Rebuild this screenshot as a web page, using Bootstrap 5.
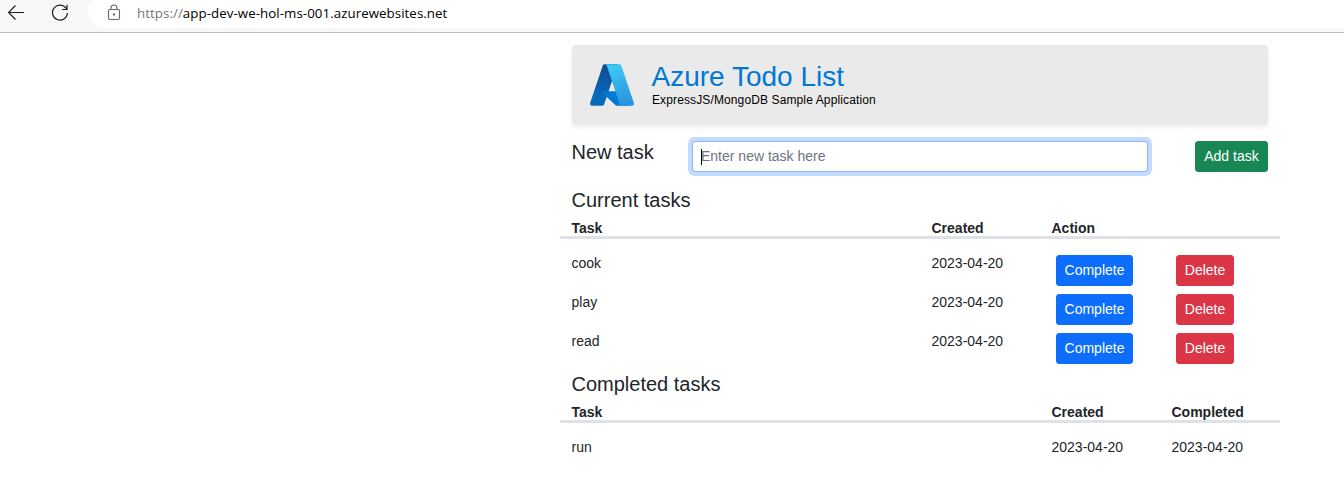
<!DOCTYPE html>
<html lang="en">
<head>
<meta charset="utf-8">
<meta name="viewport" content="width=device-width, initial-scale=1">
<title>Azure Todo List</title>
<link rel="stylesheet" href="https://cdn.jsdelivr.net/npm/bootstrap@5.3.0/dist/css/bootstrap.min.css">
<style>
  body { font-family: "Liberation Sans", Arial, sans-serif; font-size: 14px; background: #fff; height: 503px; overflow: hidden; }
  .browser-bar { height: 33px; background: #f7f7f7; border-bottom: 1px solid #bdbdbd; }
  .address { height: 28px; margin-left: 20px; padding-left: 49px; position: relative; background: #fff; border-bottom-left-radius: 16px 18px; border-top-left-radius: 7px 8px; font: 13.3px/26px "Open Sans", "Noto Sans", sans-serif; letter-spacing: .06px; color: #767676; white-space: nowrap; }
  .address b { font-weight: 400; color: #000; }
  .address svg { position: absolute; left: 19px; top: 4px; }
  .page { width: 720px; margin-left: 560px; padding-top: 12px; }
  .banner { height: 80px; margin: 0 12px 16px; padding: 16px; background: #eaeaea; }
  .banner h1 { font-size: 28px; line-height: 32px; color: #0078d4; margin: 0 0 0 -.5px; font-weight: 400; }
  .banner p { font-size: 12px; line-height: 14px; letter-spacing: .12px; color: #000; margin: 0; }
  h2 { font-size: 20px; line-height: 24px; margin: 0; font-weight: 400; }
  .new-label { padding-left: 11.5px; line-height: 22px; }
  .focused { border-color: #86b7fe; box-shadow: 0 0 0 4px #c2dbfe; }
  .form-control-sm, .btn-sm { font-size: 14px; border-radius: 3px; min-height: 31px; height: 31px; }
  .form-control-sm { padding-top: 3px; padding-bottom: 5px; }
  .form-control::placeholder { color: #6c757d; }
  .add-btn { width: 73px; padding-left: 0; padding-right: 0; }
  .caret { position: absolute; left: 21px; top: 8px; width: 1px; height: 16px; background: #000; }
  .section-title { height: 29px; padding-left: 11.5px; }
  .heads { height: 22px; line-height: 23px; border-bottom: 3px solid #dee2e6; font-weight: 700; margin-bottom: 12px; }
  .heads > div, .task > div { padding-left: 11.5px; }
  .task { height: 39px; line-height: 21px; padding-top: 2px; }
  .task .btn { margin: 2px 4px 0 4.5px; padding-left: 0; padding-right: 0; }
  .task .btn-primary { width: 77px; }
  .task .btn-danger { width: 58px; }
</style>
</head>
<body>
<header class="browser-bar d-flex">
  <svg width="60" height="28" class="ms-2 flex-shrink-0" fill="none" stroke="#1c1c1c" stroke-width="1.2">
    <path d="M16 12.5H.7M7.5 5.5l-7 7 7 7"/>
    <path d="M58.5 8.8A7.5 7.5 0 1 0 59.5 13M59 4.7v4.8h-4.8"/>
  </svg>
  <div class="address flex-grow-1">
    <svg width="14" height="17" fill="none" stroke="#666" stroke-width="1.1"><rect x="1.5" y="5.5" width="11" height="10" rx="1.5"/><path d="M4 5.5V4a3 3 0 0 1 6 0v1.5"/><circle cx="7" cy="10.5" r=".6" fill="#666"/></svg>
    <span class="url">https://<b>app-dev-we-hol-ms-001.azurewebsites.net</b></span>
  </div>
</header>

<main class="page">
  <div class="banner d-flex rounded-1 shadow-sm">
    <svg width="48" height="48" viewBox="0 0 96 96" class="flex-shrink-0">
      <defs>
        <linearGradient id="ga" x1="58.97" y1="7.41" x2="37.93" y2="69.59" gradientTransform="translate(-8 2)" gradientUnits="userSpaceOnUse"><stop offset="0" stop-color="#114a8b"/><stop offset="1" stop-color="#0669bc"/></linearGradient>
        <linearGradient id="gb" x1="47.6" y1="8" x2="72" y2="90" gradientUnits="userSpaceOnUse"><stop offset="0" stop-color="#3ccbf4"/><stop offset="1" stop-color="#2892df"/></linearGradient>
        <linearGradient id="gc" x1="60" y1="50" x2="55" y2="52" gradientUnits="userSpaceOnUse"><stop offset="0" stop-opacity=".35"/><stop offset="1" stop-opacity="0"/></linearGradient>
      </defs>
      <path fill="url(#ga)" d="M33.34 6.54h26.04l-27.03 80.1a4.15 4.15 0 0 1-3.94 2.81H8.15a4.14 4.14 0 0 1-3.93-5.47L29.4 9.38a4.15 4.15 0 0 1 3.94-2.83z"/>
      <path fill="#0078d4" d="M71.17 60.26H29.88a1.91 1.91 0 0 0-1.3 3.31l26.53 24.76a4.17 4.17 0 0 0 2.85 1.13h23.38z"/>
      <path fill="url(#gc)" d="M33.34 6.54a4.12 4.12 0 0 0-3.95 2.88L4.25 83.92a4.14 4.14 0 0 0 3.91 5.54h20.79a4.44 4.44 0 0 0 3.4-2.9l5.02-14.78 17.91 16.71a4.24 4.24 0 0 0 2.67.97h23.29L71.02 60.26H41.25L59.47 6.54z"/>
      <path fill="url(#gb)" d="M66.6 9.36a4.14 4.14 0 0 0-3.93-2.82H33.65a4.15 4.15 0 0 1 3.93 2.82l25.18 74.62a4.15 4.15 0 0 1-3.93 5.48h29.02a4.15 4.15 0 0 0 3.93-5.48z"/>
    </svg>
    <div class="ms-3">
      <h1>Azure Todo List</h1>
      <p>ExpressJS/MongoDB Sample Application</p>
    </div>
  </div>

  <form class="row g-0">
    <div class="col-2"><h2 class="new-label">New task</h2></div>
    <div class="col-8 px-2 position-relative"><div class="px-1"><input type="text" class="form-control form-control-sm focused" placeholder="Enter new task here" aria-label="New task"></div><span class="caret"></span></div>
    <div class="col-2 text-end pe-2"><button type="button" class="btn btn-success btn-sm me-1 add-btn">Add task</button></div>
  </form>

  <section class="pt-3">
    <h2 class="section-title">Current tasks</h2>
    <div class="row mx-0 heads"><div class="col-6">Task</div><div class="col-2">Created</div><div class="col-4">Action</div></div>
    <div class="row mx-0 task"><div class="col-6">cook</div><div class="col-2">2023-04-20</div><div class="col-2"><button class="btn btn-primary btn-sm">Complete</button></div><div class="col-2"><button class="btn btn-danger btn-sm">Delete</button></div></div>
    <div class="row mx-0 task"><div class="col-6">play</div><div class="col-2">2023-04-20</div><div class="col-2"><button class="btn btn-primary btn-sm">Complete</button></div><div class="col-2"><button class="btn btn-danger btn-sm">Delete</button></div></div>
    <div class="row mx-0 task"><div class="col-6">read</div><div class="col-2">2023-04-20</div><div class="col-2"><button class="btn btn-primary btn-sm">Complete</button></div><div class="col-2"><button class="btn btn-danger btn-sm">Delete</button></div></div>
  </section>

  <section class="pt-1">
    <h2 class="section-title">Completed tasks</h2>
    <div class="row mx-0 heads"><div class="col-8">Task</div><div class="col-2">Created</div><div class="col-2">Completed</div></div>
    <div class="row mx-0 task"><div class="col-8">run</div><div class="col-2">2023-04-20</div><div class="col-2">2023-04-20</div></div>
  </section>
</main>
<script src="https://cdn.jsdelivr.net/npm/bootstrap@5.3.0/dist/js/bootstrap.bundle.min.js"></script>
</body>
</html>
